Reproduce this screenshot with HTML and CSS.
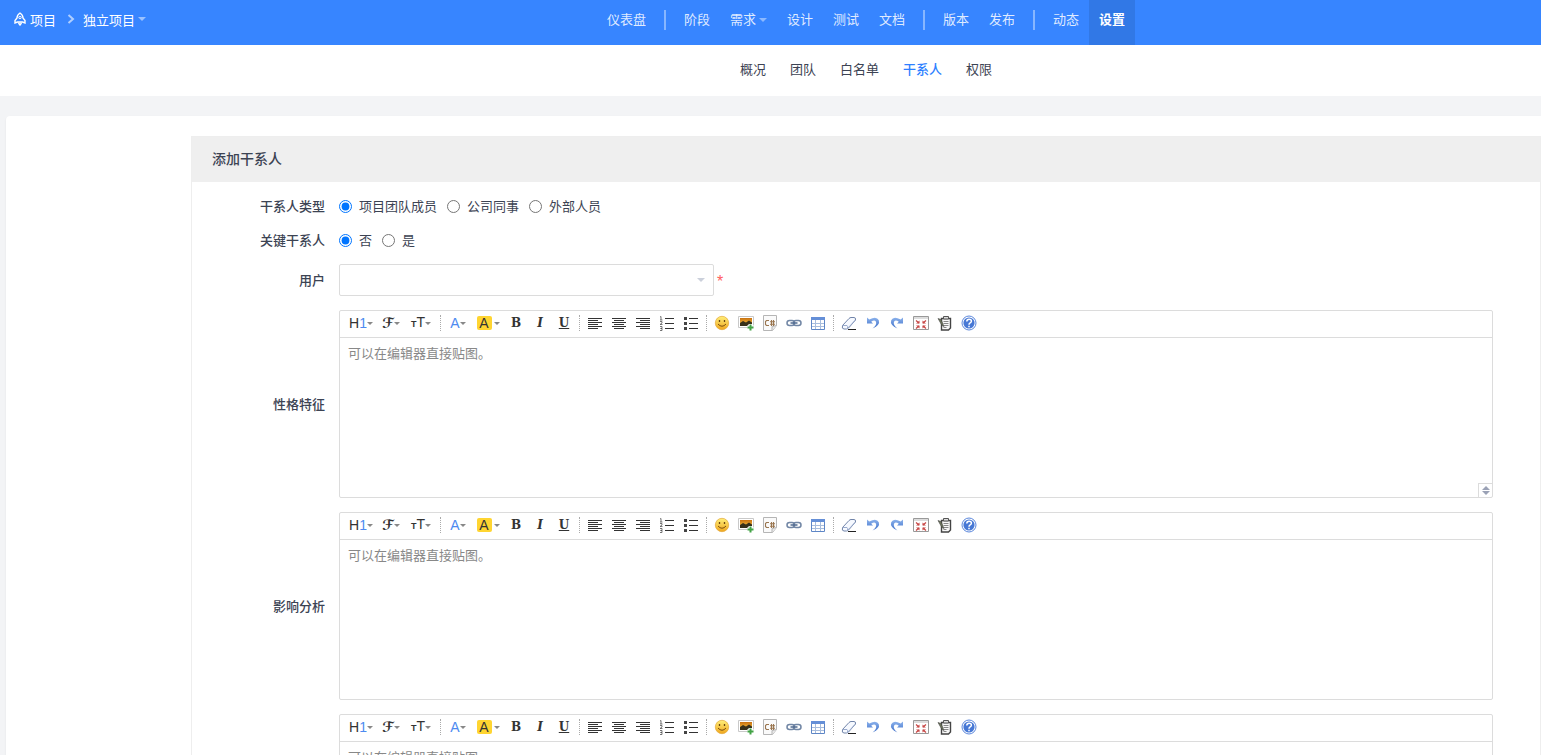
FILE: index.html
```html
<!DOCTYPE html>
<html lang="zh-CN">
<head>
    <meta charset="UTF-8">
    <meta name="viewport" content="width=device-width, initial-scale=1.0">
    <title>添加干系人</title>
    <link rel="stylesheet" href="styles.css">
</head>
<body>
    <!-- toolbar icons -->
    <svg class="sprite" aria-hidden="true">
        <defs>
            <linearGradient id="face" x1="0" y1="0" x2="0" y2="1"><stop offset="0" stop-color="#fff07a"/><stop offset="1" stop-color="#efa61d"/></linearGradient>
            <linearGradient id="sky" x1="0" y1="0" x2="0" y2="1"><stop offset="0" stop-color="#c9700f"/><stop offset="1" stop-color="#ffd24a"/></linearGradient>
            <linearGradient id="blue" x1="0" y1="0" x2="0" y2="1"><stop offset="0" stop-color="#8db3ec"/><stop offset="1" stop-color="#3d6fc9"/></linearGradient>
        </defs>
        <symbol id="left" viewBox="0 0 16 16"><path d="M1 3.5h14M1 5.500h10M1 7.500h14M1 9.500h10M1 11.500h14M1 13.500h10" stroke="#333"/></symbol>
        <symbol id="center" viewBox="0 0 16 16"><path d="M1 3.5h14M3 5.500h10M1 7.500h14M3 9.500h10M1 11.500h14M3 13.500h10" stroke="#333"/></symbol>
        <symbol id="right" viewBox="0 0 16 16"><path d="M1 3.5h14M5 5.500h10M1 7.500h14M5 9.500h10M1 11.500h14M5 13.500h10" stroke="#333"/></symbol>
        <symbol id="ol" viewBox="0 0 16 16"><path d="M6 3.500h9M6 8.500h9M6 13.500h9" stroke="#333"/><path d="M1 2l1-.5V5M1 5h2.500M1 6.500h2v1.500l-2 1.500h2.500M1 11.500h2v2h-1.500h1.500v2H1" fill="none" stroke="#555" stroke-width=".8"/></symbol>
        <symbol id="ul" viewBox="0 0 16 16"><path d="M6 3.500h9M6 8.500h9M6 13.500h9" stroke="#333"/><path d="M1 2h3v3H1zM1 7h3v3H1zM1 12h3v3H1z" fill="#444"/></symbol>
        <symbol id="smile" viewBox="0 0 16 16"><circle cx="8" cy="8" r="6.700" fill="url(#face)" stroke="#e2a83a" stroke-width=".7"/><path d="M5.500 5v2M10.500 5v2" stroke="#6b4611" stroke-width="1.300"/><path d="M4 9q4 4.500 8 0" fill="none" stroke="#7d5010"/></symbol>
        <symbol id="image" viewBox="0 0 16 16"><path d="M.5 1.500h15v11H.5z" fill="#fff" stroke="#c9c9c9"/><path d="M2 3h12v8H2z" fill="url(#sky)"/><path d="M2 8l3-2 3 1.500 3-2 3 2V11H2z" fill="#37301a"/><path d="M12.500 9v6.500M9.300 12.300h6.500" stroke="#fff" stroke-width="4"/><path d="M12.500 9.500v6M9.500 12.500h6" stroke="#43a346" stroke-width="2"/></symbol>
        <symbol id="code" viewBox="0 0 16 16"><path d="M1.500.5h13v10l-4 5h-9z" fill="#fafafa" stroke="#b5b5b5"/><path d="M14.500 10.500l-4.500 1v4" fill="#e8e8e8" stroke="#b5b5b5"/><path d="M7 5.500H4.500L3.500 6.500v3l1 1H7M9.500 5v6M11.500 5v6M8 6.700h5M8 9.200h5" fill="none" stroke="#9a7650" stroke-width="1.100"/></symbol>
        <symbol id="link" viewBox="0 0 16 16"><rect x="1" y="5.500" width="7.500" height="5" rx="2.500" fill="none" stroke="#7186a5" stroke-width="1.500"/><rect x="7.500" y="5.500" width="7.500" height="5" rx="2.500" fill="none" stroke="#7186a5" stroke-width="1.500"/><path d="M4.500 8h7" stroke="#526b91" stroke-width="1.500"/></symbol>
        <symbol id="table" viewBox="0 0 16 16"><path d="M1.500 2.500h13v12h-13z" fill="#fff" stroke="#5e86c6"/><path d="M1 2h14v3H1z" fill="#658fd7"/><path d="M2 8.500h12M2 11.500h12M5.500 5v9M10.500 5v9" stroke="#a8bddd"/></symbol>
        <symbol id="eraser" viewBox="0 0 16 16"><path d="M1.500 10.500L8 3.500q1-1 2-1h3q2 0 1.500 2.500L8 12.500q-1 1.500-2.500 1.500H3Q.5 14 1.500 10.500z" fill="#f6f9ff" stroke="#7184a9"/><path d="M2 10.500h4q1 .2.500 3L14 5.500" fill="none" stroke="#9aabcd"/><path d="M7 14.500h8" stroke="#222"/></symbol>
        <symbol id="undo" viewBox="0 0 16 16"><path d="M2 2.500v6h6L6.200 6.700Q9.500 4.200 11 6.700q1.200 3-3.500 6.800Q15.500 10 13.800 5.300Q11.500.5 4.300 4.600z" fill="url(#blue)"/></symbol>
        <symbol id="redo" viewBox="0 0 16 16"><path d="M14 2.500v6H8l1.800-1.800Q6.500 4.200 5 6.700q-1.200 3 3.500 6.800Q.5 10 2.200 5.300Q4.500.5 11.700 4.600z" fill="url(#blue)"/></symbol>
        <symbol id="full" viewBox="0 0 16 16"><path d="M.5 1.500h15v13H.5z" fill="#fff" stroke="#999"/><path d="M1 2h14v2H1z" fill="#ddd"/><path d="M3 5.500l3 2.500M13 5.500L10 8M3 13.500L6 11M13 13.500L10 11" stroke="#c84a48" stroke-width="1.300"/><path d="M6.500 5.500v3H3zM9.500 5.500v3H13zM6.500 13.500v-3H3zM9.500 13.500v-3H13z" fill="#c84a48"/></symbol>
        <symbol id="paste" viewBox="0 0 16 16"><path d="M4.500 3.500h9v9.500l-2 2h-7z" fill="#f8f8f8" stroke="#444" stroke-width="1.400"/><path d="M6.500 1.500h5v2.500h-5z" fill="#ddd" stroke="#555"/><path d="M6.500 6.500h5M6.500 8.500h5M6.500 10.500h5M6.500 12.500h3" stroke="#888"/><path d="M1 3.500l3 1 3 7-2-1z" fill="#6c7558" stroke="#444" stroke-width=".6"/></symbol>
        <symbol id="help" viewBox="0 0 16 16"><circle cx="8" cy="8" r="7" fill="#fff" stroke="#5b87dc"/><circle cx="8" cy="8" r="5.600" fill="#4778d5"/><path d="M5.800 6.500q0-2.300 2.300-2.300t2.300 1.900q0 1.200-1.200 1.800Q8 8.500 8 9.700M8 10.700v1.500" fill="none" stroke="#fff" stroke-width="1.500"/></symbol>
    </svg>

    <header class="header">
        <div class="brand">
            <a href="#"><svg class="rocket" viewBox="0 0 12 14" aria-hidden="true"><path d="M6 1Q3 3 3 6L1 8.500V11l2.500-1h5L11 11V8.500L9 6Q9 3 6 1zM4.500 11L6 13l1.500-2" fill="none" stroke="currentColor" stroke-width="1.400"/><circle cx="6" cy="5.500" r="1.200" fill="none" stroke="currentColor"/></svg>项目</a>
            <svg class="arrow" viewBox="0 0 8 10" aria-hidden="true"><path d="M1.500 1L6 5 1.500 9" fill="none" stroke="currentColor" stroke-width="2"/></svg>
            <a href="#">独立项目<span class="caret"></span></a>
        </div>
        <nav class="navbar">
            <a href="#">仪表盘</a>
            <span class="divider"></span>
            <a href="#">阶段</a>
            <a href="#">需求<span class="caret"></span></a>
            <a href="#">设计</a>
            <a href="#">测试</a>
            <a href="#">文档</a>
            <span class="divider"></span>
            <a href="#">版本</a>
            <a href="#">发布</a>
            <span class="divider"></span>
            <a href="#">动态</a>
            <a href="#" class="active">设置</a>
        </nav>
    </header>
    <nav class="subnav">
        <a href="#">概况</a>
        <a href="#">团队</a>
        <a href="#">白名单</a>
        <a href="#" class="active">干系人</a>
        <a href="#">权限</a>
    </nav>

    <main class="main">
        <div class="panel">
            <h2>添加干系人</h2>
            <form class="form">
                <span class="label" id="typeLabel">干系人类型</span>
                <div class="radios" role="radiogroup" aria-labelledby="typeLabel">
                    <label><input type="radio" name="from" value="team" checked>项目团队成员</label>
                    <label><input type="radio" name="from" value="company">公司同事</label>
                    <label><input type="radio" name="from" value="outside">外部人员</label>
                </div>

                <span class="label" id="keyLabel">关键干系人</span>
                <div class="radios" role="radiogroup" aria-labelledby="keyLabel">
                    <label><input type="radio" name="key" value="0" checked>否</label>
                    <label><input type="radio" name="key" value="1">是</label>
                </div>

                <label class="label" for="user">用户</label>
                <div class="user">
                    <div class="select"><select id="user" required><option></option></select></div>
                    <span class="required">*</span>
                </div>

                <label class="label" for="nature">性格特征</label>
                <div class="editor">
                    <div class="toolbar"></div>
                    <textarea id="nature" placeholder="可以在编辑器直接贴图。"></textarea>
                    <span class="resize"></span>
                </div>

                <label class="label" for="analysis">影响分析</label>
                <div class="editor">
                    <div class="toolbar"></div>
                    <textarea id="analysis" placeholder="可以在编辑器直接贴图。"></textarea>
                </div>

                <div class="editor">
                    <div class="toolbar"></div>
                    <textarea id="strategy" aria-label="应对策略" placeholder="可以在编辑器直接贴图。"></textarea>
                </div>
            </form>
        </div>
    </main>

    <template id="tools">
        <button type="button" class="drop"><span>H<i class="blue">1</i></span></button>
        <button type="button" class="drop script"><span>ℱ</span></button>
        <button type="button" class="drop"><span><small>T</small>T</span></button>
        <span class="sep"></span>
        <button type="button" class="drop"><span class="blue">A</span></button>
        <button type="button" class="drop"><span class="mark">A</span></button>
        <button type="button" class="serif"><b>B</b></button>
        <button type="button" class="serif"><em>I</em></button>
        <button type="button" class="serif"><u>U</u></button>
        <span class="sep"></span>
        <button type="button" aria-label="左对齐"><svg><use href="#left"/></svg></button>
        <button type="button" aria-label="居中"><svg><use href="#center"/></svg></button>
        <button type="button" aria-label="右对齐"><svg><use href="#right"/></svg></button>
        <button type="button" aria-label="编号"><svg><use href="#ol"/></svg></button>
        <button type="button" aria-label="项目符号"><svg><use href="#ul"/></svg></button>
        <span class="sep"></span>
        <button type="button" aria-label="插入表情"><svg><use href="#smile"/></svg></button>
        <button type="button" aria-label="图片"><svg><use href="#image"/></svg></button>
        <button type="button" aria-label="插入代码"><svg><use href="#code"/></svg></button>
        <button type="button" aria-label="超级链接"><svg><use href="#link"/></svg></button>
        <button type="button" aria-label="表格"><svg><use href="#table"/></svg></button>
        <span class="sep"></span>
        <button type="button" aria-label="删除格式"><svg><use href="#eraser"/></svg></button>
        <button type="button" aria-label="后退"><svg><use href="#undo"/></svg></button>
        <button type="button" aria-label="前进"><svg><use href="#redo"/></svg></button>
        <button type="button" aria-label="全屏显示"><svg><use href="#full"/></svg></button>
        <button type="button" aria-label="粘贴"><svg><use href="#paste"/></svg></button>
        <button type="button" aria-label="帮助"><svg><use href="#help"/></svg></button>
    </template>

    <script>
        // every editor gets the same set of tools
        const tools = document.getElementById("tools");
        document.querySelectorAll(".toolbar").forEach(function(bar) {
            bar.appendChild(tools.content.cloneNode(true));
        });
    </script>
</body>
</html>
```
FILE: styles.css
```css
* {
    box-sizing: border-box;
}

body {
    margin: 0;
    height: 100vh;
    overflow: hidden;
    background-color: #f3f4f6;
    color: #3c4353;
    font-family: "Noto Sans CJK SC", sans-serif;
    font-size: 13px;
    line-height: 20px;
}

a {
    color: inherit;
    text-decoration: none;
}

/* kept in the layout so the gradients still work */
.sprite {
    position: absolute;
    width: 0;
    height: 0;
}

.header {
    display: grid;
    grid-template-columns: 191px 1fr;
    height: 45px;
    background-color: #3785ff;
    color: #fff;
    line-height: 37px;
}

.brand {
    display: flex;
    align-items: center;
    height: 38px;
    padding-left: 14px;
}

.brand a {
    display: flex;
    align-items: center;
}

.rocket {
    width: 12px;
    height: 14px;
    margin-right: 4px;
}

.arrow {
    width: 8px;
    height: 10px;
    margin: 0 8px 0 11px;
    opacity: 0.6;
}

.caret {
    display: inline-block;
    margin-left: 3px;
    border: 4px solid transparent;
    border-top-color: currentColor;
    border-bottom: 0;
    vertical-align: middle;
    opacity: 0.5;
}

.navbar {
    display: flex;
    justify-content: center;
}

.navbar a {
    padding: 0 10px;
    color: rgba(255, 255, 255, 0.85);
}

.navbar .active {
    background-color: #3178e6;
    color: #fff;
    font-weight: bold;
}

.divider {
    width: 2px;
    height: 20px;
    margin: 10px 8px 0;
    background-color: rgba(255, 255, 255, 0.4);
}

.subnav {
    display: flex;
    justify-content: center;
    gap: 24px;
    height: 51px;
    padding-left: 191px;
    background-color: #fff;
    line-height: 47px;
}

.subnav .active {
    color: #2e7fff;
    font-weight: 500;
}

.main {
    margin: 20px 0 0 6px;
    padding: 20px 0 20px 185px;
    border-radius: 4px 0 0 4px;
    background-color: #fff;
    box-shadow: 0 1px 2px rgba(0, 0, 0, 0.08);
}

.panel {
    border: 1px solid #eee;
}

.panel h2 {
    margin: 0;
    padding: 0 20px 2px;
    background-color: #efefef;
    font-size: 14px;
    font-weight: 500;
    line-height: 43px;
}

.form {
    display: grid;
    grid-template-columns: 133px 1fr;
    column-gap: 14px;
    row-gap: 14px;
    align-items: center;
    padding: 14px 47px 20px 0;
}

.label {
    text-align: right;
    font-weight: 500;
}

.radios {
    display: flex;
    gap: 10px;
}

.radios label {
    display: flex;
    align-items: center;
    gap: 7px;
}

.radios input {
    width: 13px;
    height: 13px;
    margin: 0;
}

.user {
    display: flex;
    align-items: center;
    gap: 3px;
}

.select {
    display: grid;
    align-items: center;
    width: 375px;
}

.select select {
    grid-area: 1 / 1;
    height: 32px;
    border: 1px solid #dcdcdc;
    border-radius: 2px;
    background-color: #fff;
    appearance: none;
}

.select::after {
    content: "";
    grid-area: 1 / 1;
    justify-self: end;
    margin-right: 9px;
    border: 4px solid transparent;
    border-top-color: #cbd0db;
    border-bottom: 0;
    pointer-events: none;
}

.required {
    padding-top: 4px;
    color: #ff5d5d;
    font-family: "Liberation Sans", sans-serif;
    font-size: 16px;
}

.editor {
    position: relative;
    grid-column: 2;
    height: 188px;
    border: 1px solid #dcdcdc;
    border-radius: 2px;
}

.toolbar {
    display: flex;
    align-items: flex-start;
    height: 27px;
    padding-left: 7px;
    border-bottom: 1px solid #dcdcdc;
}

.toolbar button {
    display: flex;
    align-items: center;
    justify-content: center;
    width: 24px;
    height: 24px;
    padding: 0;
    border: 0;
    background: none;
    color: #333;
    font-family: "Liberation Sans", sans-serif;
    font-size: 14px;
    line-height: 14px;
}

.toolbar svg {
    width: 16px;
    height: 16px;
}

.toolbar .drop {
    width: 30px;
    padding-right: 2px;
}

.toolbar .drop::after {
    content: "";
    border: 3px solid transparent;
    border-top-color: #888;
    border-bottom: 0;
}

.toolbar .script {
    font-family: "DejaVu Sans", sans-serif;
    font-weight: bold;
}

.toolbar small {
    font-size: 9px;
    font-weight: bold;
}

.toolbar i {
    font-style: normal;
}

.toolbar .blue {
    color: #4d8af0;
}

.toolbar .mark {
    width: 15px;
    margin-right: 2px;
    border-radius: 2px;
    background-color: #ffd531;
}

.toolbar .serif {
    font-family: "DejaVu Serif", serif;
    font-size: 12px;
    font-weight: bold;
}

.sep {
    display: flex;
    justify-content: center;
    width: 7px;
    height: 16px;
    margin-top: 4px;
}

.sep::before {
    content: "";
    border-left: 1px dotted #aaa;
}

.editor textarea {
    display: block;
    width: 100%;
    height: 159px;
    padding: 5px 8px;
    border: 0;
    background: none;
    font: inherit;
    resize: none;
}

.editor textarea::placeholder {
    color: #888;
}

.resize {
    position: absolute;
    right: 0;
    bottom: 0;
    display: flex;
    flex-direction: column;
    align-items: center;
    justify-content: center;
    gap: 1px;
    width: 14px;
    height: 14px;
    border: 1px solid #dcdcdc;
    border-width: 1px 0 0 1px;
}

.resize::before,
.resize::after {
    content: "";
    border: 4px solid transparent;
    border-top: 0;
    border-bottom-color: #9aa1b5;
}

.resize::after {
    border-top: 4px solid #9aa1b5;
    border-bottom: 0;
}
```
